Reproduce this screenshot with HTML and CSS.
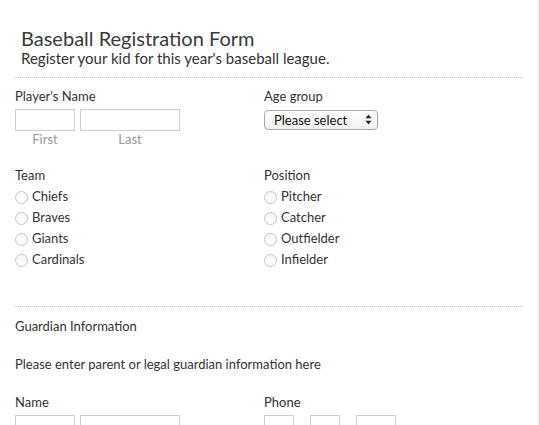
FILE: index.html
```html
<!DOCTYPE html>
<html lang="en">
<head>
<meta charset="utf-8">
<title>Baseball Registration Form</title>
<link rel="stylesheet" href="styles.css">
</head>
<body>
<div class="page">
  <header class="head">
    <h1 class="title">Baseball Registration Form</h1>
    <p class="subtitle">Register your kid for this year's baseball league.</p>
  </header>

  <div class="sep"></div>

  <div class="row row-first">
    <div class="field">
      <div class="label">Player's Name</div>
      <div class="name-inputs">
        <div class="sub">
          <input class="box box-first" type="text">
          <span class="sublabel">First</span>
        </div>
        <div class="sub">
          <input class="box box-last" type="text">
          <span class="sublabel">Last</span>
        </div>
      </div>
    </div>
    <div class="field">
      <div class="label">Age group</div>
      <div class="select">Please select
        <svg class="arrows" width="7" height="11" viewBox="0 0 7 11"><path d="M3.5 0.5 L6.5 4.2 L0.5 4.2 Z" fill="#222"/><path d="M3.5 10.5 L6.5 6.8 L0.5 6.8 Z" fill="#222"/></svg>
      </div>
    </div>
  </div>

  <div class="row row-radios">
    <div class="field">
      <div class="label label-tight">Team</div>
      <label class="radio"><span class="dot"></span>Chiefs</label>
      <label class="radio"><span class="dot"></span>Braves</label>
      <label class="radio"><span class="dot"></span>Giants</label>
      <label class="radio"><span class="dot"></span>Cardinals</label>
    </div>
    <div class="field">
      <div class="label label-tight">Position</div>
      <label class="radio"><span class="dot"></span>Pitcher</label>
      <label class="radio"><span class="dot"></span>Catcher</label>
      <label class="radio"><span class="dot"></span>Outfielder</label>
      <label class="radio"><span class="dot"></span>Infielder</label>
    </div>
  </div>

  <div class="sep sep-second"></div>

  <div class="section-title">Guardian Information</div>
  <p class="note">Please enter parent or legal guardian information here</p>

  <div class="row row-guardian">
    <div class="field">
      <div class="label">Name</div>
      <div class="name-inputs">
        <input class="box box-first" type="text">
        <input class="box box-last" type="text">
      </div>
    </div>
    <div class="field">
      <div class="label">Phone</div>
      <div class="phone-inputs">
        <input class="box box-p1" type="text">
        <input class="box box-p2" type="text">
        <input class="box box-p3" type="text">
      </div>
    </div>
  </div>
</div>
</body>
</html>
```

FILE: styles.css
```css
html, body {
  margin: 0;
  padding: 0;
  background: #fff;
}

body {
  font-family: Lato, "Open Sans", sans-serif;
  color: #333;
  overflow: hidden;
}

.page {
  width: 508px;
  min-height: 425px;
  padding: 0 15px;
  border-right: 1px solid #ececec;
}

.head {
  padding: 26px 0 0 6px;
}

.title {
  margin: 0;
  font-size: 20px;
  line-height: 24px;
  font-weight: 400;
  color: #3a3a3a;
}

.subtitle {
  margin: 0;
  font-size: 15px;
  line-height: 17px;
  color: #333;
}

.sep {
  margin-top: 10px;
  border-top: 1px dotted #c4c4c4;
}

.sep-second {
  margin-top: 36px;
}

.row {
  display: grid;
  grid-template-columns: 249px 1fr;
}

.row-first {
  padding-top: 10px;
}

.row-radios {
  margin-top: 20px;
}

.row-guardian {
  margin-top: 22px;
}

.label {
  font-size: 13px;
  line-height: 16px;
  margin-bottom: 5px;
}

.label-tight {
  margin-bottom: 3px;
}

.name-inputs {
  display: flex;
  gap: 5px;
}

.sub {
  display: flex;
  flex-direction: column;
}

.box {
  box-sizing: border-box;
  height: 22px;
  margin: 0;
  padding: 0;
  border: 1px solid #cfcfcf;
  background: #fff;
  outline: none;
}

.box-first { width: 60px; }
.box-last { width: 100px; }
.box-p1, .box-p2 { width: 30px; }
.box-p3 { width: 40px; }

.sublabel {
  font-size: 13px;
  line-height: 16px;
  color: #9a9a9a;
  text-align: center;
}

.select {
  box-sizing: border-box;
  position: relative;
  width: 114px;
  height: 20px;
  margin-top: 6px;
  padding-left: 9px;
  border: 1px solid #a9a9a9;
  border-radius: 4px;
  background: linear-gradient(#ffffff, #f3f3f3);
  font-size: 13px;
  line-height: 18px;
  color: #111;
}

.arrows {
  position: absolute;
  right: 5px;
  top: 3px;
}

.radio {
  display: flex;
  align-items: center;
  height: 21px;
  font-size: 13px;
  line-height: 21px;
}

.dot {
  box-sizing: border-box;
  width: 13px;
  height: 13px;
  margin: 2px 4px 0 0;
  border: 1px solid #c4c4c4;
  border-radius: 50%;
  background: linear-gradient(#f7f7f7, #ffffff);
}

.section-title {
  margin-top: 11px;
  font-size: 13px;
  line-height: 16px;
}

.note {
  margin: 22px 0 0;
  font-size: 13px;
  line-height: 16px;
}

.phone-inputs {
  display: flex;
  gap: 16px;
}
```
